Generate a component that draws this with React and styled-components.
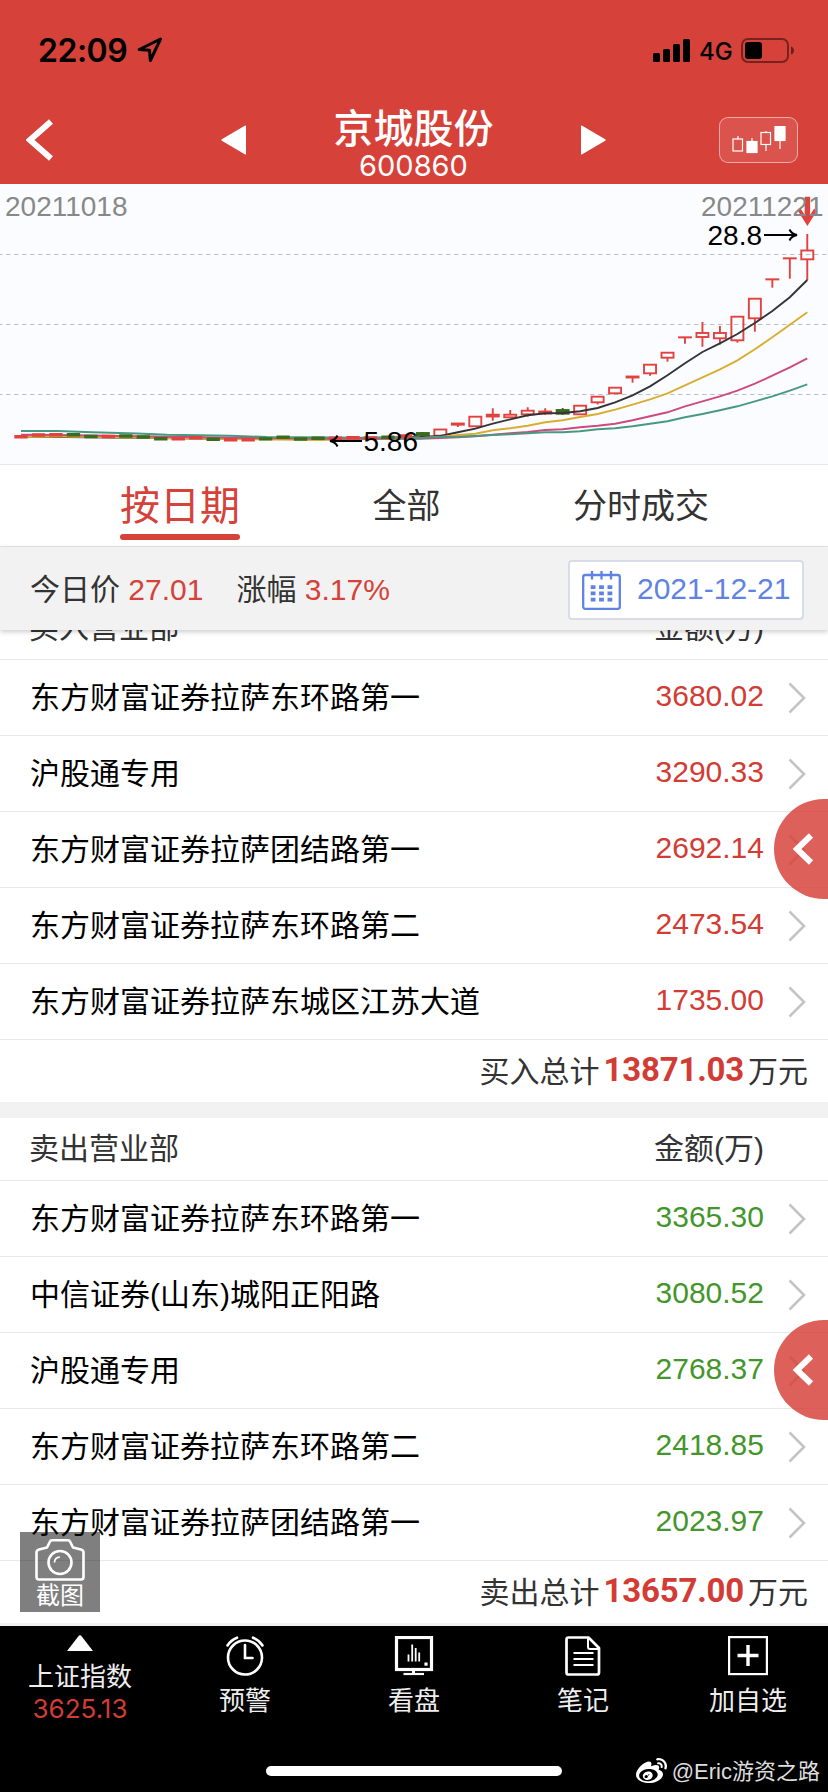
import styled, { createGlobalStyle } from "styled-components";
import { FaWeibo } from "react-icons/fa";

const RED = "#d64139";
const UP = "#e2423d";
const DOWN = "#3c6b1e";

const buyers = [
  { name: "东方财富证券拉萨东环路第一", amount: "3680.02" },
  { name: "沪股通专用", amount: "3290.33" },
  { name: "东方财富证券拉萨团结路第一", amount: "2692.14" },
  { name: "东方财富证券拉萨东环路第二", amount: "2473.54" },
  { name: "东方财富证券拉萨东城区江苏大道", amount: "1735.00" },
];

const sellers = [
  { name: "东方财富证券拉萨东环路第一", amount: "3365.30" },
  { name: "中信证券(山东)城阳正阳路", amount: "3080.52" },
  { name: "沪股通专用", amount: "2768.37" },
  { name: "东方财富证券拉萨东环路第二", amount: "2418.85" },
  { name: "东方财富证券拉萨团结路第一", amount: "2023.97" },
];

// flat part of the chart: [up?, y]
const flat = [
  [1, 252.7], [1, 251], [1, 250.7], [0, 250.7], [0, 252.5], [1, 252.5],
  [0, 252], [0, 253], [0, 254.7], [1, 254.9], [1, 253.7], [0, 255.3],
  [1, 255.7], [1, 255.7], [0, 254.9], [0, 253.3], [0, 255], [0, 254.3],
  [1, 254.3], [1, 253.7], [1, 253.9], [0, 253.3], [1, 252],
];

// [up?, top, bottom, high, low]
const candles = [
  [0, 249, 251, 248, 251.5],
  [1, 245.5, 251.7, 245.5, 252],
  [1, 239.5, 240.7, 239.5, 243],
  [1, 232.7, 242.3, 232.7, 242.3],
  [1, 230.7, 232.5, 224.3, 236.7],
  [1, 230.7, 233.3, 226, 233.3],
  [1, 226.7, 230.3, 223.3, 232.7],
  [1, 227.5, 229.5, 224.2, 230.7],
  [0, 226, 229.7, 224, 231],
  [1, 221.7, 230.3, 221.7, 230.3],
  [1, 212.7, 218.3, 212.7, 220.5],
  [1, 203.7, 209.3, 203.7, 209.3],
  [1, 192.5, 193.5, 192.5, 198.7],
  [1, 180.7, 189.3, 180.7, 191.7],
  [1, 168.7, 173.7, 168.7, 177.7],
  [1, 153.3, 153.3, 153.3, 159.7],
  [1, 149, 153, 138, 162.7],
  [1, 149, 154.3, 142, 160.5],
  [1, 132.7, 156.3, 132.7, 158.7],
  [1, 114.7, 134.3, 114.7, 147.7],
  [1, 95.3, 95.3, 95.3, 103.7],
  [1, 74.3, 74.3, 74.3, 94.7],
  [1, 66.5, 75.3, 50, 96],
];

const averages = [
  {
    color: "#333338",
    left: "21,252.5 200,254.5 300,255 420,253",
    tail: [252, 248.3, 244.7, 239.7, 235.3, 231.3, 229.3, 229, 227.3, 224, 218.3, 211.3, 202.3, 191.3, 179.3, 168, 159.3, 150, 139, 127, 113.3, 96],
  },
  {
    color: "#d9ae2f",
    left: "21,252.7 60,252.5 200,254.5 320,256 420,254",
    tail: [253, 251, 249.7, 246.3, 244.3, 241.7, 238.3, 236.3, 233, 230, 225.7, 220.7, 215.3, 209.3, 201.3, 193.3, 185.3, 176.3, 165.3, 153.3, 140.7, 128.3],
  },
  {
    color: "#cc4a80",
    left: "21,250.7 60,251 200,253.3 320,254.7 420,254.7",
    tail: [254, 253.3, 252.3, 250.7, 249.3, 248, 246, 245.3, 243.3, 241.7, 239.7, 236.3, 232.3, 228.3, 222.3, 217.3, 212.3, 206.7, 199.7, 191.7, 183.3, 174.3],
  },
  {
    color: "#479a80",
    left: "21,247 58,247 92,248.3 137,249.5 167,250.7 230,251.7 267,253 333,253.5 420,254.2",
    tail: [253, 252.7, 252, 251, 250.3, 249.3, 248.3, 248.3, 247.3, 245.3, 244.3, 242.3, 239.7, 237.3, 233.3, 230, 226.3, 222.3, 217.3, 212.3, 206.7, 200.3],
  },
];

const xAt = (i) => 21 + i * 17.473;

const KLine = () => (
  <svg width="828" height="280" viewBox="0 0 828 280">
    {[70.5, 140.5, 210.5].map((y) => (
      <line key={y} x1="-2" x2="828" y1={y} y2={y} stroke="#bcbfc6" strokeDasharray="4.5 3.5" />
    ))}
    {candles.map(([up, top, bottom, high, low], i) => {
      const x = xAt(i + 23);
      return (
        <g key={i} stroke={up ? UP : DOWN} strokeWidth="1.9" fill={up ? "none" : DOWN}>
          <path d={`M${x} ${high}V${top}M${x} ${bottom}V${low}`} />
          <rect x={x - 6} y={top} width="12" height={Math.max(bottom - top, 0.1)} />
        </g>
      );
    })}
    {averages.map(({ color, left, tail }) => (
      <polyline
        key={color}
        points={`${left} ${tail.map((y, i) => `${xAt(i + 24)},${y}`).join(" ")}`}
        fill="none"
        stroke={color}
        strokeWidth="1.9"
      />
    ))}
    {flat.map(([up, y], i) => (
      <rect key={i} x={xAt(i) - 6.7} y={y - 1.7} width="13.4" height="3.4" rx="0.5" fill={up ? UP : DOWN} />
    ))}
    <path d="M804.7 12.700h5.400V31l4.100-6.500 2.600 2.500L807.400 42 798 27l2.600-2.500 4.100 6.500z" fill={UP} />
    <g fontFamily="Liberation Sans, sans-serif" fontSize="28">
      <text x="5" y="32" fill="#888">20211018</text>
      <text x="701" y="32" fill="#888">20211221</text>
      <text x="707.500" y="60.500">28.8</text>
      <text x="363.500" y="266.500">5.86</text>
    </g>
    <g fill="none" stroke="#000" strokeWidth="2">
      <path d="M764 51h33M789.500 45.500q2 4.500 7.500 5.500q-5.500 1-7.500 5.500" />
      <path d="M362 257h-32M337.500 251.500q-2 4.500-7.500 5.500q5.500 1 7.500 5.500" />
    </g>
  </svg>
);

const ClockIcon = () => (
  <svg width="40" height="40" viewBox="0 0 40 40" fill="none" stroke="#fff" strokeWidth="2.600" strokeLinecap="round">
    <circle cx="20" cy="21.500" r="17" />
    <path d="M20 9v13h7.500M2.500 9.500Q6 4 12 1.700M28 1.700Q34 4 37.500 9.500" />
  </svg>
);

const MonitorIcon = () => (
  <svg width="40" height="40" viewBox="0 0 40 40" fill="none" stroke="#fff">
    <rect x="2.500" y="1.500" width="35" height="32" strokeWidth="3.200" />
    <path d="M14.500 25.500v-7M18.200 25.500V8.500M21.700 25.500V12M25.200 25.500v-9" strokeWidth="1.800" />
    <path d="M32 26.500v3.200" strokeWidth="3.200" />
    <path d="M19.500 34v4" strokeWidth="3" />
    <path d="M9.500 38h20.500" strokeWidth="2.200" />
  </svg>
);

const NoteIcon = () => (
  <svg width="40" height="40" viewBox="0 0 40 40" fill="none" stroke="#fff" strokeWidth="2.700" strokeLinejoin="round">
    <path d="M5.500 1.500h20L36 12v24.500q0 2-2 2H5.500q-2 0-2-2V3.500q0-2 2-2z" />
    <path d="M25 2v9q0 2 2 2h9M10.500 17h20M10.500 23h20M10.500 29h20" strokeWidth="2" />
  </svg>
);

const AddIcon = () => (
  <svg width="40" height="40" viewBox="0 0 40 40" fill="none" stroke="#fff" strokeWidth="2.200">
    <rect x="1.100" y="1.100" width="37.800" height="37" />
    <path d="M20 9v21M9.500 19.500h21" strokeWidth="3.400" />
  </svg>
);

const CalendarIcon = () => (
  <svg width="39" height="40" viewBox="0 0 39 40" fill="none" stroke="#5f83e4" strokeWidth="2.300">
    <rect x="1.200" y="5" width="36.600" height="33.800" rx="2" />
    <path d="M10 1v8.500M19.500 1v8.500M29 1v8.500" />
    <path d="M8.700 17.200h21.600M8.700 23.400h21.600M8.700 29.600h21.600" strokeWidth="3.800" strokeDasharray="4.800 3.600" />
  </svg>
);

const CameraIcon = () => (
  <svg width="50" height="42" viewBox="0 0 50 42" fill="none" stroke="#fff" strokeWidth="2.600" strokeLinejoin="round">
    <path d="M4 10.500l8-2 3-6q.5-1.200 2-1.200h16q1.500 0 2 1.200l3 6 8 2q2.500.7 2.500 3v24.500q0 2.500-2.500 2.500H4q-2.500 0-2.500-2.500V13.500q0-2.300 2.500-3z" />
    <circle cx="25" cy="23.500" r="11.500" />
    <path d="M19.500 23.500q0-5 5.500-5.500" strokeWidth="1.700" />
  </svg>
);

const Arrow = () => (
  <svg width="19" height="32" viewBox="0 0 19 32" fill="none" stroke="#c4c4c4" strokeWidth="2.600">
    <path d="M2.500 1.500L17 16 2.500 30.500" />
  </svg>
);

const Department = ({ title, rows, totalLabel, total, sell }) => (
  <Section>
    <SectionHead>
      <span>{title}</span>
      <span>金额(万)</span>
    </SectionHead>
    {rows.map((row) => (
      <Row key={row.name}>
        <Name>{row.name}</Name>
        <Amount $sell={sell}>{row.amount}</Amount>
        <Arrow />
      </Row>
    ))}
    <Total>
      {totalLabel}
      <b>{total}</b>
      万元
    </Total>
    <Drawer>
      <svg width="22" height="32" viewBox="0 0 22 32" fill="none" stroke="#fff" strokeWidth="6">
        <path d="M19 2.500L5 16l14 13.500" />
      </svg>
    </Drawer>
  </Section>
);

const App = () => {
  return (
    <Screen>
      <GlobalStyle />
      <StatusBar>
        <Time>22:09</Time>
        <svg width="26" height="26" viewBox="0 0 26 26" fill="none" stroke="#000" strokeWidth="3" strokeLinejoin="round">
          <path d="M23.500 2L2.200 12.500l10.300.8.900 10.200z" />
        </svg>
        <StatusRight>
          <svg width="38" height="23" viewBox="0 0 38 23">
            <rect x="0" y="14" width="7" height="9" rx="1.500" />
            <rect x="10" y="10" width="7" height="13" rx="1.500" />
            <rect x="20" y="5" width="7" height="18" rx="1.500" />
            <rect x="30" y="0" width="7" height="23" rx="1.500" />
          </svg>
          <span>4G</span>
          <svg width="54" height="25" viewBox="0 0 54 25">
            <rect x="1" y="1" width="46" height="23" rx="6" fill="none" stroke="#000" strokeOpacity="0.450" strokeWidth="2" />
            <rect x="4" y="4" width="17" height="17" rx="3" />
            <path d="M50 8.500q3 1 3 4t-3 4z" fillOpacity="0.500" />
          </svg>
        </StatusRight>
      </StatusBar>
      <Header>
        <Back width="28" height="42" viewBox="0 0 28 42">
          <path d="M25 2.500L4 21l21 18.500" fill="none" stroke="#fff" strokeWidth="6" />
        </Back>
        <svg width="25" height="30" viewBox="0 0 25 30">
          <path d="M25 1v28q0 .8-.8.400L.8 15.800q-1-.8 0-1.600L24.200.6q.8-.4.8.4z" fill="#fff" />
        </svg>
        <Title>
          <h1>京城股份</h1>
          <p>600860</p>
        </Title>
        <svg width="25" height="30" viewBox="0 0 25 30">
          <path d="M0 1v28q0 .8.8.400l23.400-13.600q1-.8 0-1.600L.8.6Q0 .2 0 1z" fill="#fff" />
        </svg>
        <ChartButton>
          <svg width="54" height="28" viewBox="0 0 54 28" fill="none" stroke="#fff" strokeWidth="1.200">
            <path d="M6 10v3M20 12v4M34 5v2M34 19v6M48 14v9" />
            <rect x="1" y="13" width="9.500" height="12" />
            <rect x="15" y="15.500" width="10" height="11" fill="#fff" />
            <rect x="29" y="6.500" width="9.500" height="12" />
            <rect x="43" y="0.500" width="10" height="14" fill="#fff" />
          </svg>
        </ChartButton>
      </Header>
      <Chart>
        <KLine />
      </Chart>
      <Tabs>
        <Tab $active>按日期</Tab>
        <Tab>全部</Tab>
        <Tab>分时成交</Tab>
      </Tabs>
      <PriceBar>
        <Price>
          今日价 <em>27.01</em>
        </Price>
        <Price>
          涨幅 <em>3.17%</em>
        </Price>
        <DatePicker>
          <CalendarIcon />
          <span>2021-12-21</span>
        </DatePicker>
      </PriceBar>
      <List>
        <Department title="买入营业部" rows={buyers} totalLabel="买入总计" total="13871.03" />
        <Department title="卖出营业部" rows={sellers} totalLabel="卖出总计" total="13657.00" sell />
      </List>
      <BottomNav>
        <Capture>
          <CameraIcon />
          截图
        </Capture>
        <IndexItem>
          <svg width="26" height="16" viewBox="0 0 26 16">
            <path d="M12 .6q1-.8 2 0L26 16H0z" fill="#fff" />
          </svg>
          上证指数
          <em>3625.13</em>
        </IndexItem>
        <NavItem>
          <ClockIcon />
          预警
        </NavItem>
        <NavItem>
          <MonitorIcon />
          看盘
        </NavItem>
        <NavItem>
          <NoteIcon />
          笔记
        </NavItem>
        <NavItem>
          <AddIcon />
          加自选
        </NavItem>
        <HomeBar />
        <Watermark>
          <FaWeibo />
          @Eric游资之路
        </Watermark>
      </BottomNav>
    </Screen>
  );
};

const GlobalStyle = createGlobalStyle`
  * {
    box-sizing: border-box;
  }
  body {
    margin: 0;
    background: #fff;
    font-family: "Liberation Sans", "Noto Sans CJK SC", sans-serif;
  }
  em {
    font-style: normal;
  }
  svg {
    display: block;
    flex-shrink: 0;
  }
`;

const Screen = styled.div`
  width: 828px;
  height: 1792px;
  display: flex;
  flex-direction: column;
  overflow: hidden;
  background: #fff;
`;

const StatusBar = styled.div`
  height: 96px;
  flex-shrink: 0;
  display: flex;
  align-items: center;
  padding: 4px 33px 0 38px;
  background: ${RED};
  font-family: Inter, sans-serif;
`;

const Time = styled.span`
  width: 99px;
  font-size: 32px;
  font-weight: 600;
  letter-spacing: -0.5px;
  white-space: nowrap;
`;

const StatusRight = styled.div`
  margin-left: auto;
  display: flex;
  align-items: center;
  gap: 8px;
  font-size: 24px;
  font-weight: 500;
  span {
    width: 34px;
    padding-top: 2px;
  }
`;

const Header = styled.header`
  height: 88px;
  flex-shrink: 0;
  display: grid;
  grid-template-columns: 221px 25px 335px 25px 1fr;
  align-items: center;
  background: ${RED};
  color: #fff;
`;

const Back = styled.svg`
  margin-left: 26px;
`;

const Title = styled.div`
  padding-top: 8px;
  text-align: center;
  h1 {
    margin: 0;
    font-size: 40px;
    font-weight: 500;
    line-height: 44px;
  }
  p {
    margin: -1px 0 0;
    font-family: Inter, sans-serif;
    font-size: 29px;
    line-height: 32px;
  }
`;

const ChartButton = styled.div`
  justify-self: end;
  margin-right: 30px;
  width: 79px;
  height: 46px;
  display: flex;
  align-items: center;
  justify-content: center;
  border: 1px solid rgba(255, 255, 255, 0.5);
  border-radius: 9px;
  background: rgba(255, 255, 255, 0.1);
`;

const Chart = styled.div`
  height: 281px;
  flex-shrink: 0;
  background: #fbfcff;
  border-bottom: 1px solid #e6e7ea;
`;

const Tabs = styled.nav`
  height: 82px;
  flex-shrink: 0;
  display: flex;
  justify-content: space-between;
  padding: 0 119px 0 120px;
  border-bottom: 1px solid #e6e6e6;
`;

const Tab = styled.div`
  height: 75px;
  line-height: 83px;
  font-size: ${(props) => (props.$active ? "40px" : "34px")};
  color: ${(props) => (props.$active ? RED : "#333")};
  position: relative;
  &::after {
    content: "";
    display: ${(props) => (props.$active ? "block" : "none")};
    position: absolute;
    left: 0;
    bottom: 0;
    width: 100%;
    height: 6px;
    border-radius: 3px;
    background: ${RED};
  }
`;

const PriceBar = styled.div`
  position: relative;
  z-index: 1;
  height: 83px;
  flex-shrink: 0;
  display: flex;
  align-items: center;
  padding: 3px 24px 0 30px;
  background: #f2f2f2;
  box-shadow: 0 2px 5px rgba(0, 0, 0, 0.2);
`;

const Price = styled.div`
  margin-right: 33px;
  padding-bottom: 6px;
  font-size: 30px;
  color: #333;
  em {
    color: ${RED};
  }
`;

const DatePicker = styled.div`
  margin-left: auto;
  width: 236px;
  height: 60px;
  display: flex;
  align-items: center;
  gap: 16px;
  padding-left: 12px;
  border: 2px solid #d8dce8;
  border-radius: 4px;
  background: #fff;
  color: #5f83e4;
  font-size: 30px;
  white-space: nowrap;
  span {
    padding-bottom: 2px;
  }
`;

const List = styled.main`
  height: 1029px;
  flex-shrink: 0;
  margin-top: -33px;
  background: #f2f2f2;
  display: flex;
  flex-direction: column;
  gap: 16px;
`;

const Section = styled.section`
  position: relative;
  background: #fff;
`;

const SectionHead = styled.div`
  height: 63px;
  display: flex;
  justify-content: space-between;
  align-items: center;
  padding: 0 64px 6px 29px;
  border-bottom: 1px solid #e8e8e8;
  font-size: 30px;
  color: #333;
`;

const Row = styled.div`
  height: 76px;
  display: flex;
  align-items: center;
  padding: 0 22px 0 30px;
  border-bottom: 1px solid #e8e8e8;
  font-size: 30px;
`;

const Name = styled.span`
  flex: 1;
  padding-bottom: 5px;
`;

const Amount = styled.span`
  margin: 0 23px 4px 0;
  color: ${(props) => (props.$sell ? "#44962c" : "#d23c34")};
`;

const Total = styled.div`
  height: 62px;
  display: flex;
  align-items: center;
  justify-content: flex-end;
  padding: 0 20px 4px 0;
  font-size: 30px;
  color: #333;
  b {
    margin: 1px 4px 0 4px;
    font-family: Roboto, sans-serif;
    font-size: 33px;
    letter-spacing: -0.200px;
    color: #d23c34;
  }
`;

const Drawer = styled.div`
  position: absolute;
  right: 0;
  top: 202px;
  width: 54px;
  height: 100px;
  display: flex;
  align-items: center;
  padding-left: 18px;
  border-radius: 50px 0 0 50px;
  background: rgba(214, 65, 57, 0.83);
`;

const BottomNav = styled.footer`
  position: relative;
  height: 166px;
  flex-shrink: 0;
  display: grid;
  grid-template-columns: 160px 170px 168px 170px 160px;
  background: #000;
  color: #eee;
  font-size: 26px;
`;

const NavItem = styled.div`
  display: flex;
  flex-direction: column;
  align-items: center;
  gap: 8px;
  padding-top: 10px;
  line-height: 34px;
`;

const IndexItem = styled(NavItem)`
  gap: 9px;
  padding-top: 9px;
  em {
    margin-top: -11px;
    font-family: Inter, sans-serif;
    font-size: 26px;
    color: #d23c34;
  }
`;

const Capture = styled.div`
  position: absolute;
  left: 20px;
  top: -94px;
  width: 80px;
  height: 80px;
  display: flex;
  flex-direction: column;
  align-items: center;
  padding-top: 7px;
  background: rgba(0, 0, 0, 0.5);
  color: #fff;
  font-size: 24px;
  line-height: 30px;
`;

const HomeBar = styled.div`
  position: absolute;
  left: 266px;
  bottom: 16px;
  width: 296px;
  height: 10px;
  border-radius: 5px;
  background: #fff;
`;

const Watermark = styled.div`
  position: absolute;
  right: 8px;
  bottom: 5px;
  display: flex;
  align-items: center;
  gap: 5px;
  font-size: 22px;
  line-height: 30px;
  white-space: nowrap;
  color: #ddd;
  svg {
    width: 31px;
    height: 31px;
    color: #fff;
  }
`;

export default App;
